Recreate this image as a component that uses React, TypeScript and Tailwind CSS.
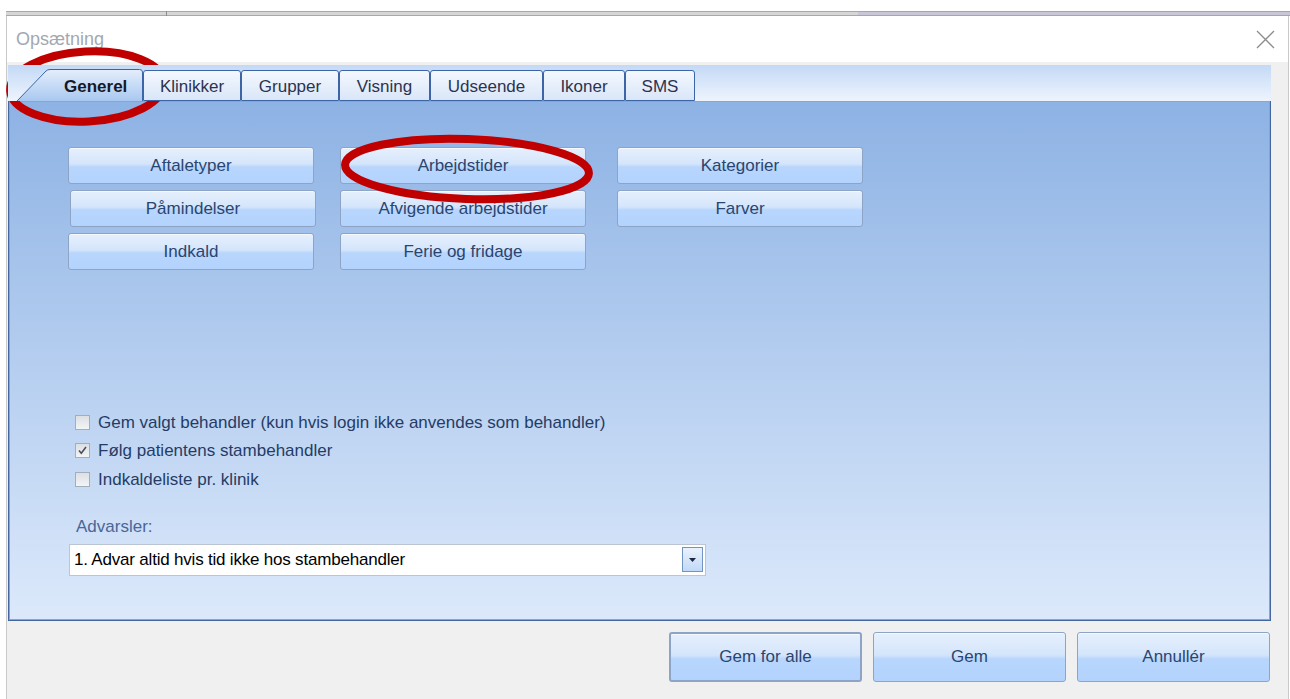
import React from 'react';

// Opsætning dialog – "Generel" tab

const tabs = [
    {label: 'Klinikker', w: 'w-[98px]'},
    {label: 'Grupper', w: 'w-[98px]'},
    {label: 'Visning', w: 'w-[91px]'},
    {label: 'Udseende', w: 'w-[113px]'},
    {label: 'Ikoner', w: 'w-[82px]'},
    {label: 'SMS', w: 'w-[70px]'},
];

const columns = [
    [{label: 'Aftaletyper'}, {label: 'Påmindelser', extra: 'ml-[2px]'}, {label: 'Indkald'}],
    [{label: 'Arbejdstider'}, {label: 'Afvigende arbejdstider'}, {label: 'Ferie og fridage'}],
    [{label: 'Kategorier', extra: 'ml-[1px]'}, {label: 'Farver', extra: 'ml-[1px]'}],
];

const options = [
    {label: 'Gem valgt behandler (kun hvis login ikke anvendes som behandler)', checked: false},
    {label: 'Følg patientens stambehandler', checked: true},
    {label: 'Indkaldeliste pr. klinik', checked: false},
];

function BlueButton({label, className}: {label: string; className?: string}) {
    return (
        <button
            className={`flex items-center justify-center rounded-[3px] border border-[#8ea4c6] bg-[linear-gradient(to_bottom,#e6f0fd_0%,#d4e5fb_46%,#b8d6fd_54%,#b3d3fd_100%)] text-[17px] text-[#2a4570] shadow-[inset_0_1px_0_#f5f9ff] ${className ?? ''}`}
        >
            {label}
        </button>
    );
}

function CheckBox({checked}: {checked: boolean}) {
    return (
        <div className="flex h-[15px] w-[15px] items-center justify-center border border-[#a3aebd] bg-[linear-gradient(to_bottom,#dcdfe3,#f3f4f6)]">
            {checked && (
                <svg width="11" height="11" viewBox="0 0 11 11">
                    <path d="M2 5.5 L4.3 8.2 L9 2" fill="none" stroke="#4b4f57" strokeWidth="1.6"/>
                </svg>
            )}
        </div>
    );
}

export default function App() {
    return (
        <div className="relative h-[699px] w-[1290px] overflow-hidden bg-white font-['Liberation_Sans',Arial,sans-serif]">
            {/* window edge behind the dialog */}
            <div className="h-[11px]"/>
            <div className="ml-[6px] flex h-[5px]">
                <div className="relative w-[852px] border-y border-[#a9a9a9] bg-[#d6d6d6]">
                    <div className="absolute left-[160px] top-[-1px] h-[5px] w-px bg-[#8c8c8c]"/>
                </div>
                <div className="flex-1 border-y border-[#a6a2bd] bg-[#c9c6d8]"/>
            </div>

            <div className="ml-[6px] flex h-[683px] w-[1283px] flex-col border-x border-[#c9c9c9] bg-[#f0f0f0]">
                {/* title bar */}
                <div className="flex h-[46px] items-center justify-between bg-white pl-[9px] pr-[13px]">
                    <span className="text-[18px] text-[#a3a8b0]">Opsætning</span>
                    <svg width="19" height="19" viewBox="0 0 19 19">
                        <path d="M1 1 L18 18 M18 1 L1 18" stroke="#8c8c8c" strokeWidth="1.3"/>
                    </svg>
                </div>

                <div className="flex flex-col pl-px pr-[17px] pt-[3px]">
                    {/* tab strip */}
                    <div className="relative z-10 -mb-px flex h-[36px] items-end bg-[linear-gradient(to_bottom,#c4d9f6,#eef4fd)] pl-[6px]">
                        <div className="relative flex h-[32px] w-[129px] items-center pl-[50px] pt-[3px]">
                            <svg className="absolute inset-0" width="129" height="32" viewBox="0 0 129 32">
                                <defs>
                                    <linearGradient id="selTab" x1="0" y1="0" x2="0" y2="1">
                                        <stop offset="0" stopColor="#e4eefc"/>
                                        <stop offset="1" stopColor="#a9c8f0"/>
                                    </linearGradient>
                                </defs>
                                <path d="M3 32 L32 2 Q33.5 0.5 36 0.5 L125.5 0.5 Q128.5 0.5 128.5 3 L128.5 32"
                                      fill="url(#selTab)" stroke="#3d64a6" strokeWidth="1"/>
                            </svg>
                            <span className="relative text-[17px] font-bold text-[#141a26]">Generel</span>
                        </div>
                        {tabs.map(t => (
                            <div
                                key={t.label}
                                className={`flex h-[31px] items-center justify-center rounded-t-[3px] border border-[#3d64a6] bg-[linear-gradient(to_bottom,#f4f8fe,#d9e6f8)] pt-[3px] text-[17px] text-[#2b3350] ${t.w}`}
                            >
                                {t.label}
                            </div>
                        ))}
                    </div>

                    {/* tab page */}
                    <div className="flex h-[521px] flex-col border border-[#45679f] bg-[linear-gradient(to_bottom,#8db2e4,#dce9fb)] pl-[59px] pt-[46px] shadow-[inset_0_0_0_1px_#86a5d4]">
                        <div className="flex">
                            {columns.map((col, i) => (
                                <div
                                    key={i}
                                    className={`flex w-[246px] flex-col gap-[6px] ${i === 1 ? 'ml-[26px]' : ''} ${i === 2 ? 'ml-[30px]' : ''}`}
                                >
                                    {col.map(b => (
                                        <BlueButton key={b.label} label={b.label} className={`h-[37px] w-[246px] ${b.extra ?? ''}`}/>
                                    ))}
                                </div>
                            ))}
                        </div>

                        <div className="ml-[7px] mt-[138px] flex flex-col">
                            {options.map(o => (
                                <div key={o.label} className="flex h-[28.5px] items-center gap-[8px]">
                                    <CheckBox checked={o.checked}/>
                                    <span className="text-[17px] text-[#253c66]">{o.label}</span>
                                </div>
                            ))}
                        </div>

                        <div className="ml-[8px] mt-[23px] flex h-[20px] items-center text-[17px] text-[#4a6698]">
                            Advarsler:
                        </div>

                        <div className="ml-px mt-[7px] flex h-[32px] w-[637px] items-center justify-between border border-[#bcc6d3] bg-white pl-[4px] pr-[2px]">
                            <span className="text-[17px] tracking-[-0.2px] text-black">1. Advar altid hvis tid ikke hos stambehandler</span>
                            <div className="flex h-[25px] w-[21px] items-center justify-center border border-[#7393c2] bg-[linear-gradient(to_bottom,#eaf2fd,#c1d9f7)]">
                                <svg width="7" height="4" viewBox="0 0 7 4">
                                    <path d="M0 0 L7 0 L3.5 4 Z" fill="#1c2740"/>
                                </svg>
                            </div>
                        </div>
                    </div>

                    {/* dialog buttons */}
                    <div className="mt-[11px] flex justify-end gap-[11px] pr-px">
                        <BlueButton label="Gem for alle" className="h-[50px] w-[193px] border-2 border-[#6f8cb5]"/>
                        <BlueButton label="Gem" className="h-[50px] w-[193px]"/>
                        <BlueButton label="Annullér" className="h-[50px] w-[193px]"/>
                    </div>
                </div>
            </div>

            {/* red markings drawn on top */}
            <svg className="pointer-events-none absolute left-0 top-0" width="1290" height="699" viewBox="0 0 1290 699">
                <ellipse cx="87" cy="86.5" rx="77" ry="35" fill="none" stroke="#c00000" strokeWidth="8" transform="rotate(-3 87 86.5)"/>
                <ellipse cx="467" cy="169" rx="122" ry="30" fill="none" stroke="#c00000" strokeWidth="8" transform="rotate(2 467 169)"/>
            </svg>
        </div>
    );
}
